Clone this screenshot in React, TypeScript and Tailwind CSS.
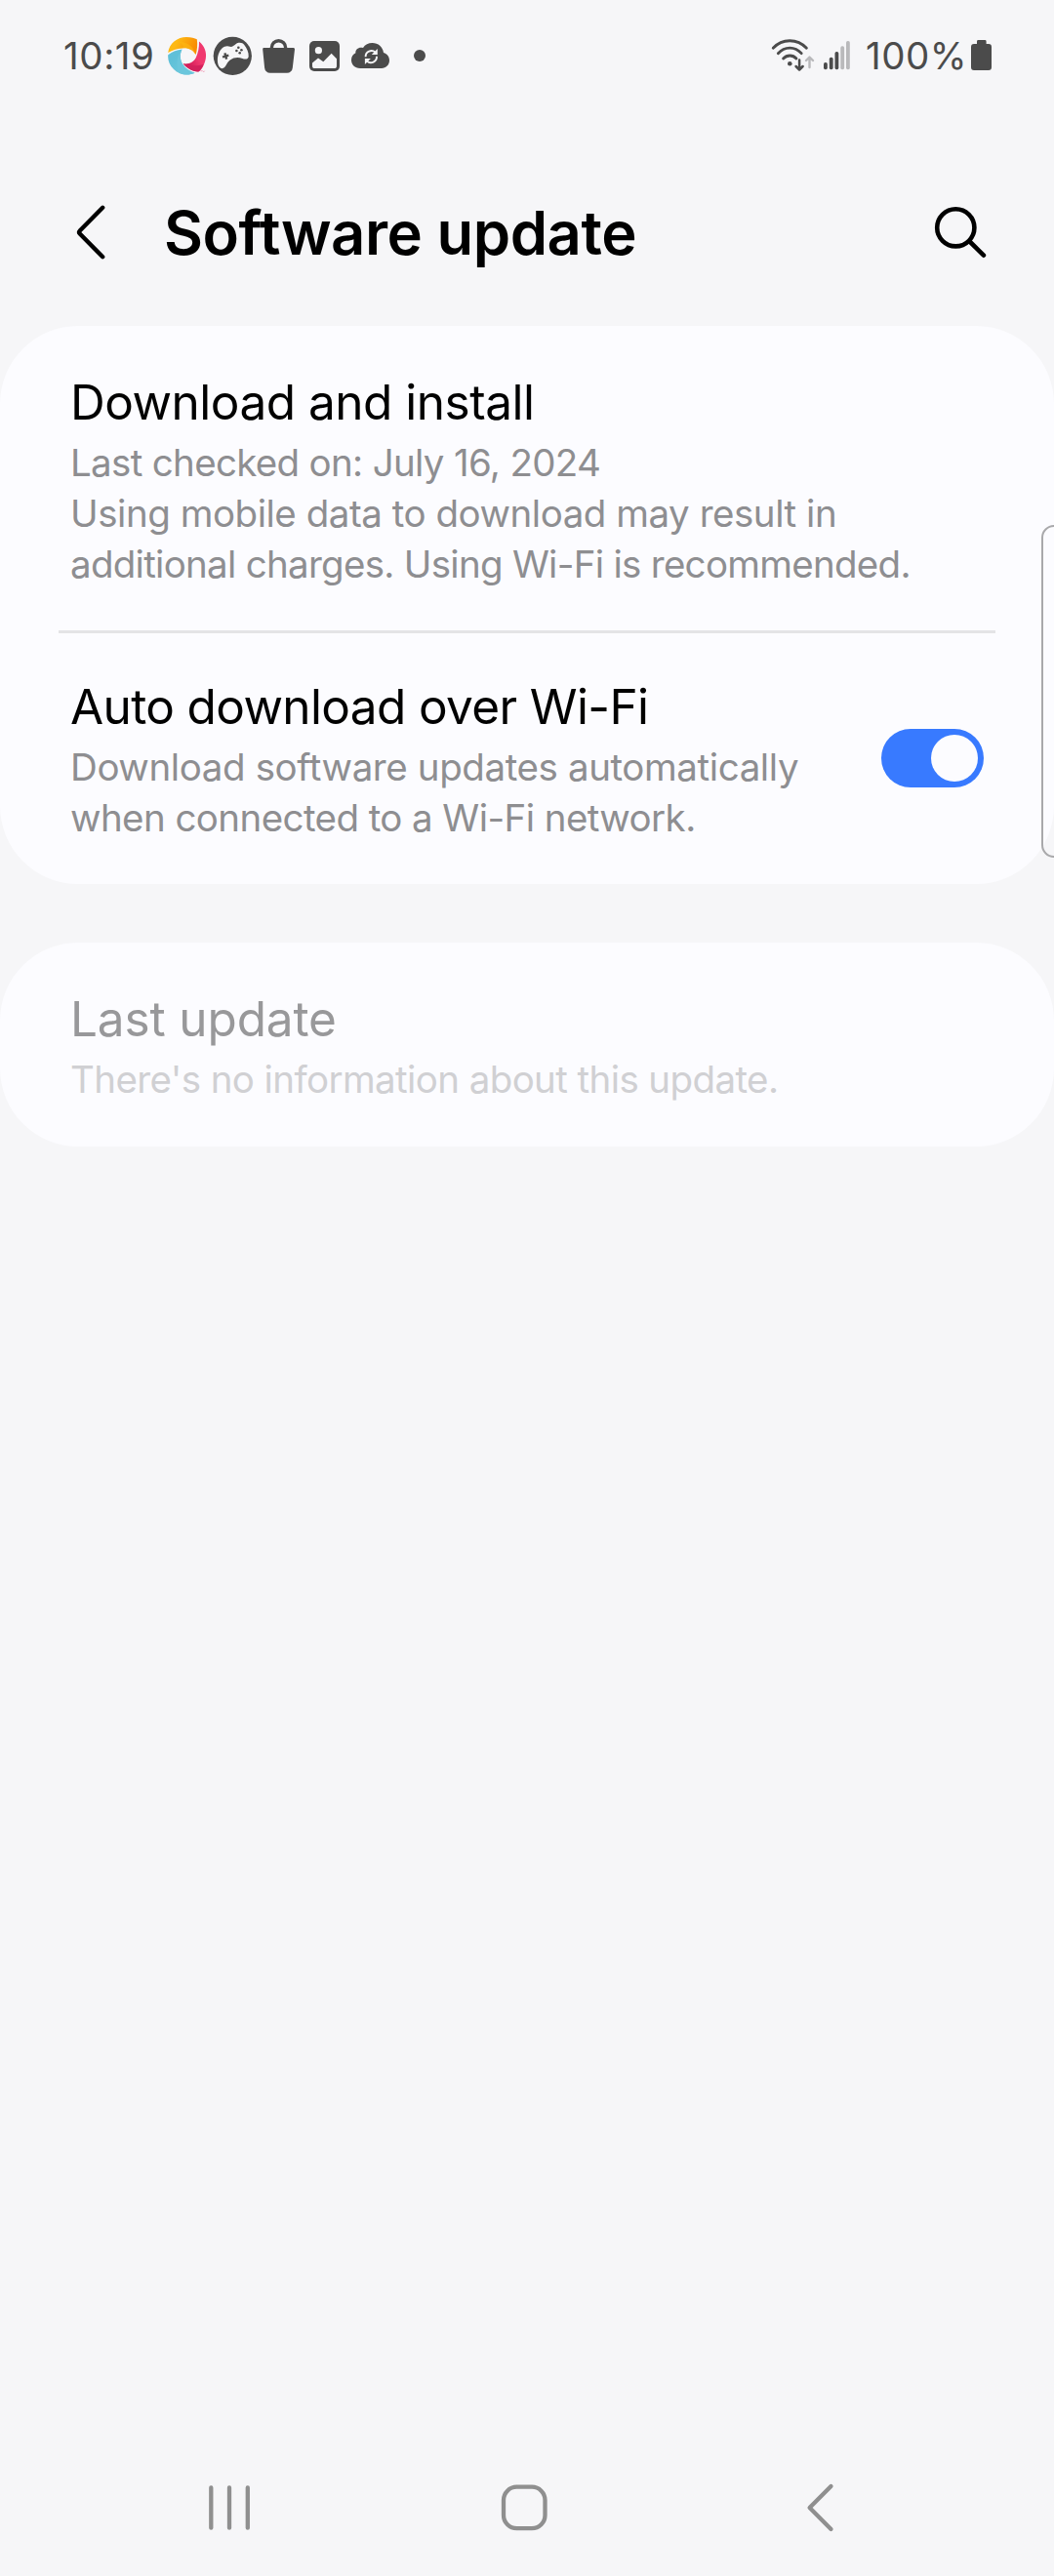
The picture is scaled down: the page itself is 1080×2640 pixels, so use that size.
import type { ReactNode } from "react";

function Swirl() {
  return (
    <svg width="44" height="42" viewBox="170 36 44 42">
      <defs>
        <linearGradient id="gy" x1="0" y1="0" x2="1" y2="0.3">
          <stop offset="0.35" stopColor="#fdb913" />
          <stop offset="1" stopColor="#f98d04" />
        </linearGradient>
        <linearGradient id="gp" x1="0.8" y1="0.3" x2="0.1" y2="0.9">
          <stop offset="0.3" stopColor="#f0396f" />
          <stop offset="1" stopColor="#c9124f" />
        </linearGradient>
        <linearGradient id="gb" x1="0" y1="0" x2="0.8" y2="1">
          <stop offset="0.3" stopColor="#5fc0d8" />
          <stop offset="1" stopColor="#6fc9dd" />
        </linearGradient>
      </defs>
      <path d="M172.2 54 C173.5 44 182 38 191 38 C196 38 199.5 39 201.8 40.3 C202.6 46 202 51.5 200.6 56 C197.5 51 193 48.8 187 49.4 C181 50 176 51.5 172.2 54 Z" fill="url(#gy)" />
      <path d="M183 43 C192 42.5 198 47.5 200.6 56 C197.5 51 193 48.8 187 49.4 C189 47 187 44.5 183 43 Z" fill="#fdb913" opacity="0.6" />
      <path d="M204 42.5 C209.5 47 212 53.5 210.8 60 C209.5 67 206.5 71.5 203.3 73.6 C197 73 191.5 70 187.8 65.3 C194 66 198.5 63.5 200.8 59 C203 54 204.2 48.5 204 42.5 Z" fill="url(#gp)" />
      <path d="M187.8 65.3 C196 68 203 67.5 208.5 66 C207 70 205 72.5 203.3 73.6 C197 73 191.5 70 187.8 65.3 Z" fill="#d3215c" />
      <path d="M186.6 50.6 C184 55.5 184.3 61 187 65.5 C189.8 70 194.5 73.3 199.7 74.8 C192 78.2 183.5 76.5 178 71 C173.5 66.5 171.8 61.5 172.2 56.2 C176.5 53 181.5 51.2 186.6 50.6 Z" fill="url(#gb)" />
      <path d="M186.6 50.6 C182.5 56 179.5 63 183 74.5 C188 77.5 195 77 199.7 74.8 C194.5 73.3 189.8 70 187 65.5 C184.3 61 184 55.5 186.6 50.6 Z" fill="#6bc6dc" />
      <path d="M205.5 72.7h2 M208 72.7l0.8 1 l0.8 -1" stroke="#f08aa8" strokeWidth="0.8" fill="none" />
    </svg>
  );
}

function Gamepad() {
  return (
    <svg width="48" height="42" viewBox="214 36 48 42">
      <circle cx="238.3" cy="57.3" r="19.6" fill="#4b4b4b" />
      <path d="M227.5 49.5 C230 47 233.5 46.8 235.5 47.8 C238 48.5 239.5 46.5 241.5 45.2 C244.5 43 248.5 43.5 250.3 46 C253 49.5 255 53.5 254.7 58 C254.5 60.5 251.5 61.2 248.5 60 C244 58.3 239.5 58.8 235.8 61.5 C232.5 64 231.8 67.5 229.8 69.3 C227.8 71 225 70 223.8 67 C222 62 222.8 54 227.5 49.5 Z" fill="#f6f6f8" />
      <g fill="#4b4b4b">
        <path d="M229.2 54.8 l2.3 -0.7 l0.6 2 l1.9 -0.6 l0.6 2.2 l-1.9 0.6 l0.6 2 l-2.3 0.7 l-0.6 -2 l-2.1 0.6 l-0.6 -2.2 l2.1 -0.6 Z" />
        <circle cx="244.3" cy="48.8" r="1.3" />
        <circle cx="247.4" cy="51.3" r="1.3" />
        <circle cx="242.4" cy="52" r="1.3" />
        <circle cx="245.7" cy="54.3" r="1.3" />
      </g>
    </svg>
  );
}

function Bag() {
  return (
    <svg width="48" height="42" viewBox="262 36 48 42">
      <path d="M278.4 51 V48.8 a7.1 7.1 0 0 1 14.2 0 V51" fill="none" stroke="#4b4b4b" strokeWidth="3.4" />
      <path d="M270.5 49 H300.8 a1.3 1.3 0 0 1 1.2 1.4 L299.8 69.4 a5.8 5.8 0 0 1 -5.7 5.3 H276.8 a5.8 5.8 0 0 1 -5.7 -5.3 L269.2 50.4 a1.3 1.3 0 0 1 1.3 -1.4 Z" fill="#4b4b4b" />
    </svg>
  );
}

function Photo() {
  return (
    <svg width="45" height="42" viewBox="310 36 45 42">
      <rect x="317" y="42" width="31" height="31" rx="5" fill="#4b4b4b" />
      <circle cx="326.4" cy="51.7" r="3.6" fill="#f6f6f8" />
      <path d="M320 64.5 L326 59.6 L331.3 63.2 L339.6 54.8 L345 60.2 V67.5 a2.6 2.6 0 0 1 -2.6 2.6 H322.6 a2.6 2.6 0 0 1 -2.6 -2.6 Z" fill="#f6f6f8" />
    </svg>
  );
}

function CloudSync() {
  return (
    <svg width="50" height="42" viewBox="355 36 50 42">
      <path d="M369 70 C363.5 70 360 66 360 61.5 C360 58 361.8 55.5 364.4 54.2 C364 50.5 367.8 47.8 372 49 C374 45.8 377.5 44 381.5 44 C387.5 44 392.2 48 393 54 C396.8 55 399 58.2 399 61.8 C399 66.5 395.6 70 391 70 Z" fill="#4b4b4b" />
      <g fill="none" stroke="#f6f6f8" strokeWidth="1.9">
        <path d="M374.6 58.2 A6 6 0 0 1 384.6 53.6" />
        <path d="M386 57.8 A6 6 0 0 1 376 62.6" />
      </g>
      <path d="M386.8 50 V56 H380.8 Z M373.9 66 V60 H379.9 Z" fill="#f6f6f8" />
    </svg>
  );
}

function Wifi() {
  return (
    <svg width="52" height="42" viewBox="786 36 52 42" fill="none" strokeLinecap="round">
      <g stroke="#4b4b4b" strokeWidth="2.8">
        <path d="M792.2 49.3 C801.5 39.2 817 39.2 826.4 49.3" />
        <path d="M797.3 54.7 C804 47.2 814.6 47.2 821.2 54.7" />
        <path d="M802.6 60 C806.4 56 812.4 56 816 60" />
      </g>
      <circle cx="809.3" cy="65.3" r="2.3" fill="#4b4b4b" />
      <path d="M819.1 61.5 V71 M815.6 68 L819.1 71.5 L822.6 68" stroke="#4b4b4b" strokeWidth="2.5" strokeLinejoin="round" />
      <path d="M829.5 69 V59 M826 62 L829.5 58.6 L833 62" stroke="#b9b9bb" strokeWidth="2.4" strokeLinejoin="round" />
    </svg>
  );
}

function Signal() {
  return (
    <svg width="42" height="42" viewBox="838 36 42 42">
      <g fill="#4b4b4b">
        <rect x="844" y="64" width="3.8" height="7.2" rx="1.7" />
        <rect x="849.8" y="58.8" width="3.8" height="12.4" rx="1.7" />
        <rect x="855.5" y="53" width="3.8" height="18.2" rx="1.7" />
      </g>
      <g fill="#b9b9bb">
        <rect x="861.3" y="47.2" width="3.8" height="24" rx="1.7" />
        <rect x="867" y="42" width="3.8" height="29.2" rx="1.7" />
      </g>
    </svg>
  );
}

function Battery() {
  return (
    <svg width="30" height="42" viewBox="990 36 30 42">
      <path d="M1002.4 41 h6.8 a1.4 1.4 0 0 1 1.4 1.4 V45 h2.4 a3 3 0 0 1 3 3 V69 a3 3 0 0 1 -3 3 H998 a3 3 0 0 1 -3 -3 V48 a3 3 0 0 1 3 -3 h3 V42.4 a1.4 1.4 0 0 1 1.4 -1.4 Z" fill="#4b4b4b" />
    </svg>
  );
}

function StatusBar() {
  return (
    <div className="flex h-[114px] items-center pr-[60px] pl-[65px] text-[38.5px] leading-[42px] text-[#4b4b4b]">
      <div className="w-[105px] tracking-[0.6px] whitespace-nowrap">10:19</div>
      <Swirl />
      <Gamepad />
      <Bag />
      <Photo />
      <CloudSync />
      <div className="ml-[19px] size-3 rounded-full bg-[#4b4b4b]" />
      <div className="ml-auto flex items-center">
        <Wifi />
        <Signal />
        <div className="ml-[7px] w-[103px] tracking-[0.5px] whitespace-nowrap">100%</div>
        <Battery />
      </div>
    </div>
  );
}

function Header() {
  return (
    <header className="flex h-[220px] items-center pt-[29px] pr-[60px] pl-[70px]">
      <svg width="98" height="65" viewBox="70 206 98 65" fill="none">
        <path d="M105.2 212.8 L82 236.2 Q80.2 238 82 239.8 L105.2 263.2" stroke="#000" strokeWidth="4.4" strokeLinecap="round" strokeLinejoin="round" />
      </svg>
      <h1 className="text-[61.5px] leading-[80px] font-semibold tracking-[-0.45px] whitespace-nowrap text-black">Software update</h1>
      <svg className="ml-auto" width="70" height="65" viewBox="950 206 70 65" fill="none" stroke="#000" strokeWidth="4.6" strokeLinecap="round">
        <circle cx="979.3" cy="233.3" r="19.1" />
        <path d="M993.6 247.5 L1007.9 261.7" />
      </svg>
    </header>
  );
}

function Title({ className, children }: { className: string; children: ReactNode }) {
  return <div className={`text-[49.5px] leading-[64px] whitespace-nowrap ${className}`}>{children}</div>;
}

function Caption({ className, children }: { className: string; children: ReactNode }) {
  return <div className={`mt-1 flex flex-col text-[38.5px] leading-[52px] whitespace-nowrap ${className}`}>{children}</div>;
}

function Toggle() {
  return (
    <div className="mb-[3px] flex h-[60px] w-[105px] items-center justify-end rounded-full bg-[#387aff] p-1.5">
      <div className="size-12 rounded-full bg-[#fcfcff]" />
    </div>
  );
}

export default function App() {
  return (
    <div className="relative flex h-[2640px] w-[1080px] flex-col overflow-hidden bg-[#f6f6f8] font-['Inter',sans-serif]">
      <StatusBar />
      <Header />
      <section className="rounded-[80px] bg-[#fcfcff] px-[60px]">
        <div className="px-3 pt-[46px] pb-[42px]">
          <Title className="tracking-[-0.49px] text-black">Download and install</Title>
          <Caption className="text-[#8e8e91]">
            <span className="tracking-[-0.68px]">Last checked on: July 16, 2024</span>
            <span className="tracking-[-0.47px]">Using mobile data to download may result in</span>
            <span className="tracking-[-0.72px]">additional charges. Using Wi-Fi is recommended.</span>
          </Caption>
        </div>
        <div className="h-[3px] bg-[#e4e4e6]" />
        <div className="flex items-center justify-between px-3 pt-[43px] pb-[42px]">
          <div>
            <Title className="tracking-[-0.63px] text-black">Auto download over Wi-Fi</Title>
            <Caption className="text-[#8e8e91]">
              <span className="tracking-[-0.4px]">Download software updates automatically</span>
              <span className="tracking-[-0.58px]">when connected to a Wi-Fi network.</span>
            </Caption>
          </div>
          <Toggle />
        </div>
      </section>
      <section className="mt-[60px] rounded-[80px] bg-[#fcfcff] px-[72px] pt-[46px] pb-[43px]">
        <Title className="tracking-[-0.14px] text-[#98989a]">Last update</Title>
        <Caption className="text-[#d0d0d3]">
          <span className="tracking-[-0.6px]">There's no information about this update.</span>
        </Caption>
      </section>
      <nav className="mt-auto flex h-[140px] items-center px-[200px]">
        <svg width="680" height="60" viewBox="200 2540 680 60" fill="none" stroke="#8f8f8f" strokeWidth="4.3" strokeLinecap="round" strokeLinejoin="round">
          <path d="M216.3 2549.5 V2590.7 M235 2549.5 V2590.7 M253.8 2549.5 V2590.7" />
          <rect x="516" y="2548.7" width="42.5" height="42.5" rx="13.5" />
          <path d="M851.5 2548 L829.6 2570 L851.5 2592" />
        </svg>
      </nav>
      <div className="absolute top-[538px] right-[-13px] h-[341px] w-[26px] rounded-l-[13px] border-2 border-[#a9a9ab]" />
    </div>
  );
}
